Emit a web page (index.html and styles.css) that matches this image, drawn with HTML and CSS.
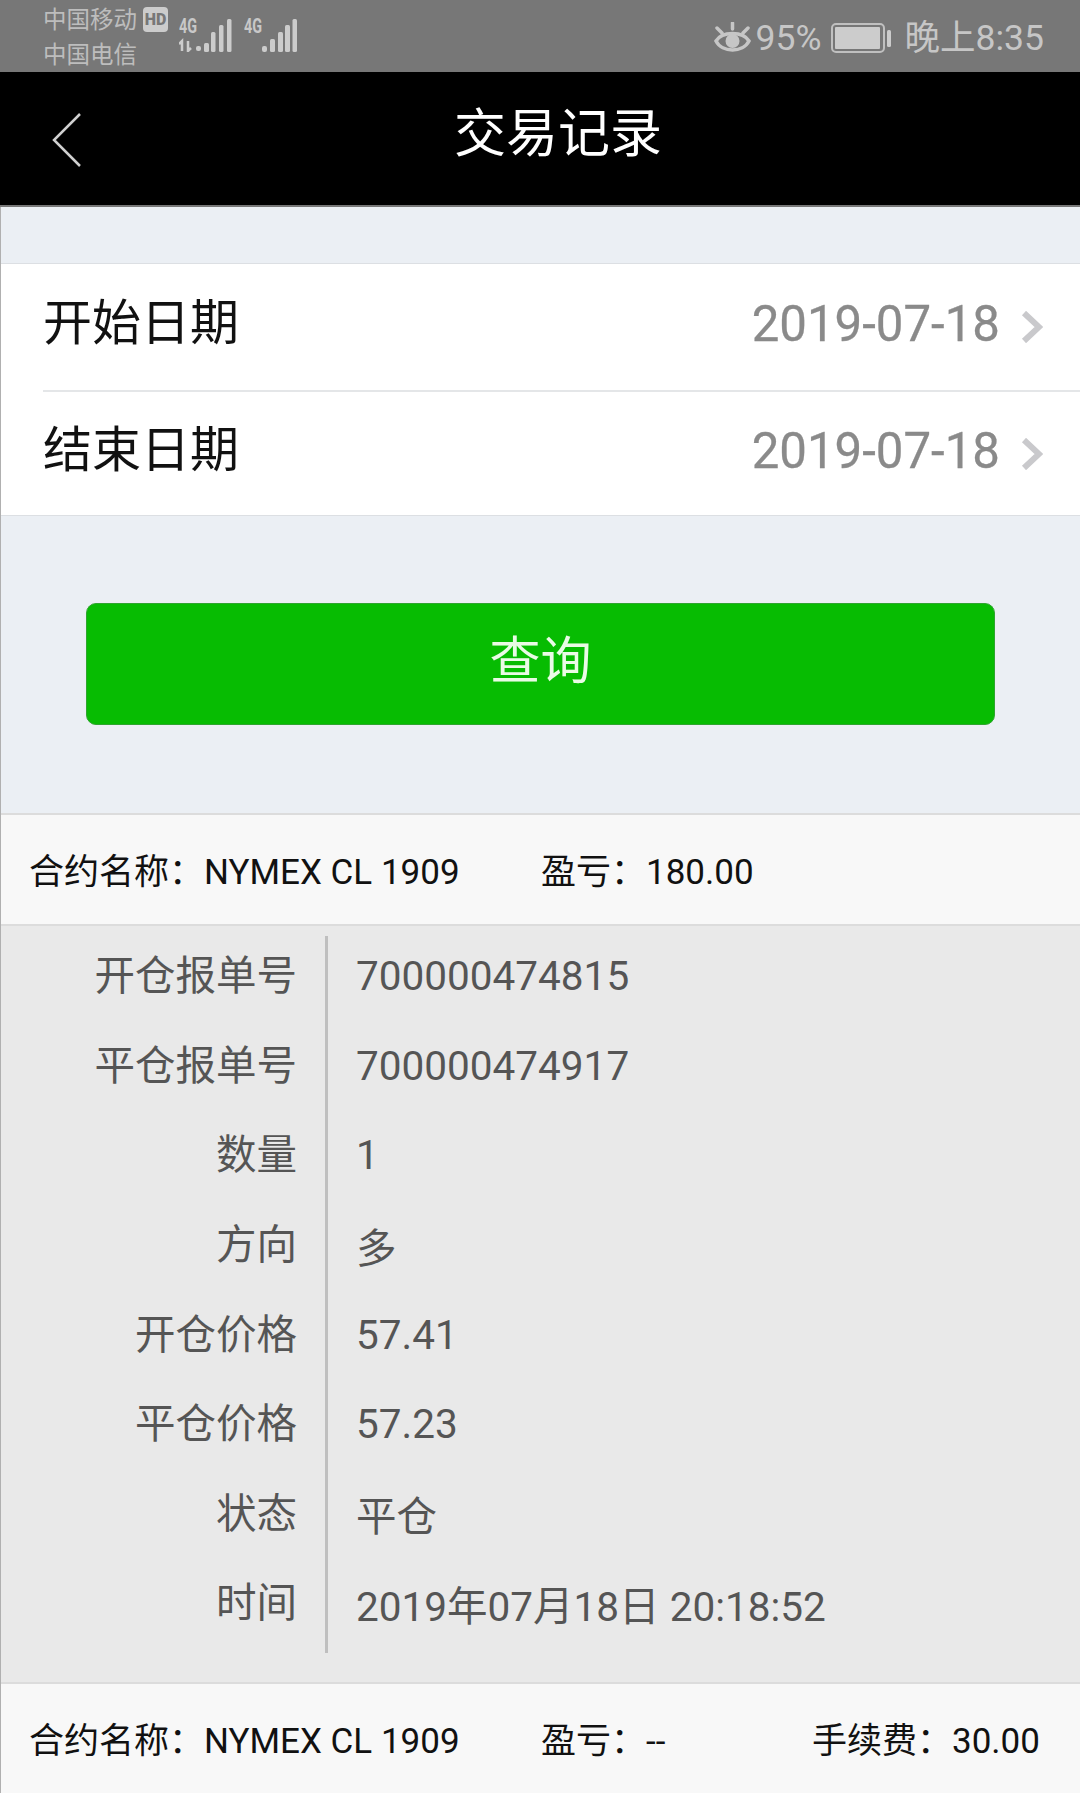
FILE: index.html
```html
<!DOCTYPE html>
<html lang="zh-CN">
<head>
<meta charset="utf-8">
<title>交易记录</title>
<link rel="stylesheet" href="styles.css">
</head>
<body>
<div class="page">
  <header class="status">
    <div class="carriers">
      <div class="carrier">中国移动</div>
      <div class="carrier">中国电信</div>
    </div>
    <span class="hd">HD</span>
    <div class="signal signal-a">
      <span class="net">4G</span>
      <svg class="bars" width="53" height="18" viewBox="0 0 53 18">
        <path class="arrows" d="M3 17V7L0 10M9 7V17L12 14" />
        <g class="bar"><rect x="17" y="12" width="5" height="5" rx="2"/><rect x="25" y="9" width="5" height="9" rx="1.5"/></g>
      </svg>
      <svg class="bars tall" width="21" height="33" viewBox="0 0 21 33">
        <rect x="0" y="13" width="4.5" height="20" rx="1.5"/><rect x="8" y="6" width="4.5" height="27" rx="1.5"/><rect x="16" y="0" width="4.5" height="33" rx="1.5"/>
      </svg>
    </div>
    <div class="signal signal-b">
      <span class="net">4G</span>
      <svg class="bars" width="53" height="33" viewBox="0 0 53 33">
        <rect x="18" y="27" width="5" height="6" rx="2"/><rect x="26" y="20" width="5" height="13" rx="1.5"/><rect x="34" y="13" width="5" height="20" rx="1.5"/><rect x="41" y="6" width="5" height="27" rx="1.5"/><rect x="48.500" y="0" width="4.500" height="33" rx="1.500"/>
      </svg>
    </div>
    <div class="status-right">
      <svg class="eye" width="37" height="32" viewBox="0 0 37 32">
        <path class="eye-line" d="M2 19C8 9 29 9 35 19C29 31 8 31 2 19Z"/>
        <circle class="eye-dot" cx="18.500" cy="19" r="7"/>
        <path class="eye-line" d="M18.500 1V7M3 6L8 11M34 6L29 11"/>
      </svg>
      <span class="pct">95%</span>
      <svg class="battery" width="61" height="30" viewBox="0 0 61 30">
        <rect class="batt-frame" x="1" y="1" width="52" height="28" rx="4"/>
        <rect class="batt-fill" x="4" y="4" width="45" height="22" rx="1"/>
        <rect class="batt-fill" x="56" y="7" width="4" height="17" rx="1.500"/>
      </svg>
      <span class="clock">晚上8:35</span>
    </div>
  </header>

  <nav class="nav">
    <svg class="back" width="30" height="54" viewBox="0 0 30 54">
      <path d="M28 1L2 27L28 53"/>
    </svg>
    <h1 class="title">交易记录</h1>
  </nav>

  <main class="content">
    <section class="dates">
      <div class="date-row">
        <span class="date-label">开始日期</span>
        <span class="date-value">2019-07-18</span>
        <svg class="chev" width="22" height="32" viewBox="0 0 22 32"><path d="M3 2L18 16L3 30"/></svg>
      </div>
      <div class="date-row">
        <span class="date-label">结束日期</span>
        <span class="date-value">2019-07-18</span>
        <svg class="chev" width="22" height="32" viewBox="0 0 22 32"><path d="M3 2L18 16L3 30"/></svg>
      </div>
    </section>

    <div class="action">
      <button class="query" type="button">查询</button>
    </div>

    <section class="summary">
      <span class="s-name">合约名称：NYMEX CL 1909</span>
      <span class="s-pl">盈亏：180.00</span>
    </section>

    <section class="detail">
      <dl class="table">
        <div class="row"><dt>开仓报单号</dt><dd>700000474815</dd></div>
        <div class="row"><dt>平仓报单号</dt><dd>700000474917</dd></div>
        <div class="row"><dt>数量</dt><dd>1</dd></div>
        <div class="row"><dt>方向</dt><dd>多</dd></div>
        <div class="row"><dt>开仓价格</dt><dd>57.41</dd></div>
        <div class="row"><dt>平仓价格</dt><dd>57.23</dd></div>
        <div class="row"><dt>状态</dt><dd>平仓</dd></div>
        <div class="row"><dt>时间</dt><dd>2019年07月18日 20:18:52</dd></div>
      </dl>
    </section>

    <section class="summary last">
      <span class="s-name">合约名称：NYMEX CL 1909</span>
      <span class="s-pl">盈亏：--</span>
      <span class="s-fee">手续费：30.00</span>
    </section>
  </main>
</div>
</body>
</html>
```
FILE: styles.css
```css
* { box-sizing: border-box; }
html, body { margin: 0; padding: 0; }
body {
  width: 1080px;
  height: 1793px;
  overflow: hidden;
  background: #ebeff4;
  font-family: Roboto, "Noto Sans CJK SC", sans-serif;
}
.page { display: flex; flex-direction: column; height: 1793px; }

.status {
  display: flex;
  height: 72px;
  align-items: flex-start;
  background: #777777;
  color: #c8c8c8;
  padding-left: 43px;
  flex: none;
}
.carriers { width: 100px; padding-top: 3px; }
.carrier { font-size: 23.500px; line-height: 35px; color: #bdbdbd; white-space: nowrap; }
.hd {
  width: 25px; height: 25px; margin-top: 7px;
  background: #cccccc; color: #777777;
  border-radius: 4px;
  font: 900 16px/25px "Roboto", sans-serif;
  text-align: center;
}
.signal { position: relative; display: flex; align-items: flex-end; height: 52px; margin-top: 0; }
.signal-a { margin-left: 11px; width: 65px; }
.signal-b { width: 53px; }
.signal .net {
  position: absolute; left: 0; top: 15px;
  font: 700 20px/22px "Roboto", sans-serif;
  transform: scaleX(.72); transform-origin: left center;
  color: #c8c8c8;
}
.signal-b .net { left: 0; }
.bars { display: block; fill: #cccccc; }
.arrows { fill: none; stroke: #cccccc; stroke-width: 2.500; }
.tall { margin-left: -21px; }
.signal-a .bars:first-of-type { margin-bottom: 0; }

.status-right {
  display: flex;
  align-items: center;
  margin-left: auto;
  height: 72px;
  padding-right: 36px;
  padding-top: 3px;
  color: #c6c6c6;
}
.eye { margin-right: 5px; }
.eye-line { fill: none; stroke: #c6c6c6; stroke-width: 3.500; stroke-linecap: round; }
.eye-dot { fill: #c6c6c6; }
.pct { font-size: 35.500px; line-height: 40px; width: 77px; white-space: nowrap; }
.battery { margin-left: -2px; margin-right: 13px; }
.batt-frame { fill: none; stroke: #c0c0c0; stroke-width: 2; }
.batt-fill { fill: #cccccc; }
.clock { font-size: 35.500px; line-height: 40px; white-space: nowrap; }

.nav {
  display: flex;
  align-items: center;
  justify-content: center;
  position: relative;
  height: 135px;
  background: #000000;
  border-bottom: 2px solid #777777;
  flex: none;
}
.back {
  position: absolute; left: 52px; top: 41px;
  fill: none; stroke: #d0d0d0; stroke-width: 2.500;
}
.title {
  margin: 0 0 7px 36px;
  width: 208px;
  font-size: 52px;
  line-height: 64px;
  font-weight: 400;
  color: #ffffff;
  white-space: nowrap;
}

.content {
  flex: 1;
  border-left: 1px solid #b0b0b0;
  padding-top: 56px;
  display: flex;
  flex-direction: column;
}

.dates {
  background: #ffffff;
  border-top: 1px solid #dcdfe3;
  border-bottom: 1px solid #dcdfe3;
  padding-left: 42px;
}
.date-row {
  display: flex;
  align-items: center;
  height: 126px;
  padding-right: 37px;
}
.date-row + .date-row { border-top: 2px solid #e4e6e8; height: 125px; }
.date-label { font-size: 49px; line-height: 60px; color: #111111; margin: 0 auto 6px 0; }
.date-value { font-size: 49.200px; line-height: 60px; color: #8a8a8a; margin-bottom: 6px; -webkit-text-stroke: 0.300px #8a8a8a; }
.chev { margin-left: 21px; fill: none; stroke: #c9c9cc; stroke-width: 6; }

.action { padding: 87px 84px 88px 85px; }
.query {
  display: block;
  width: 909px;
  height: 122px;
  border: 1px solid #2fa52f;
  border-radius: 10px;
  background: #07bc02;
  color: #eafbe6;
  font-family: Roboto, "Noto Sans CJK SC", sans-serif;
  font-size: 51px;
  padding: 0 0 14px;
}

.summary {
  display: flex;
  align-items: center;
  height: 113px;
  padding: 0 0 2px 28px;
  background: #f8f8f8;
  border-top: 2px solid #dcdcdc;
  border-bottom: 2px solid #dcdcdc;
  font-size: 35px;
  color: #111111;
  white-space: nowrap;
}
.summary.last { height: auto; flex: 1; border-bottom: 0; padding-bottom: 2px; }
.s-name { width: 512px; }
.s-pl { width: 271px; }

.detail { background: #e9e9e9; padding: 10px 0 30px; height: 756px; flex: none; }
.table { margin: 0; }
.row { display: flex; height: 89.600px; align-items: center; }
.row dt {
  width: 327px;
  height: 100%;
  padding: 0 28px 16px 0;
  border-right: 3px solid #bfbfbf;
  display: flex;
  align-items: center;
  justify-content: flex-end;
  font-size: 40.500px;
  color: #555555;
}
.row dd { margin: 0 0 9px 28px; font-size: 40.500px; color: #555555; white-space: nowrap; }
```
